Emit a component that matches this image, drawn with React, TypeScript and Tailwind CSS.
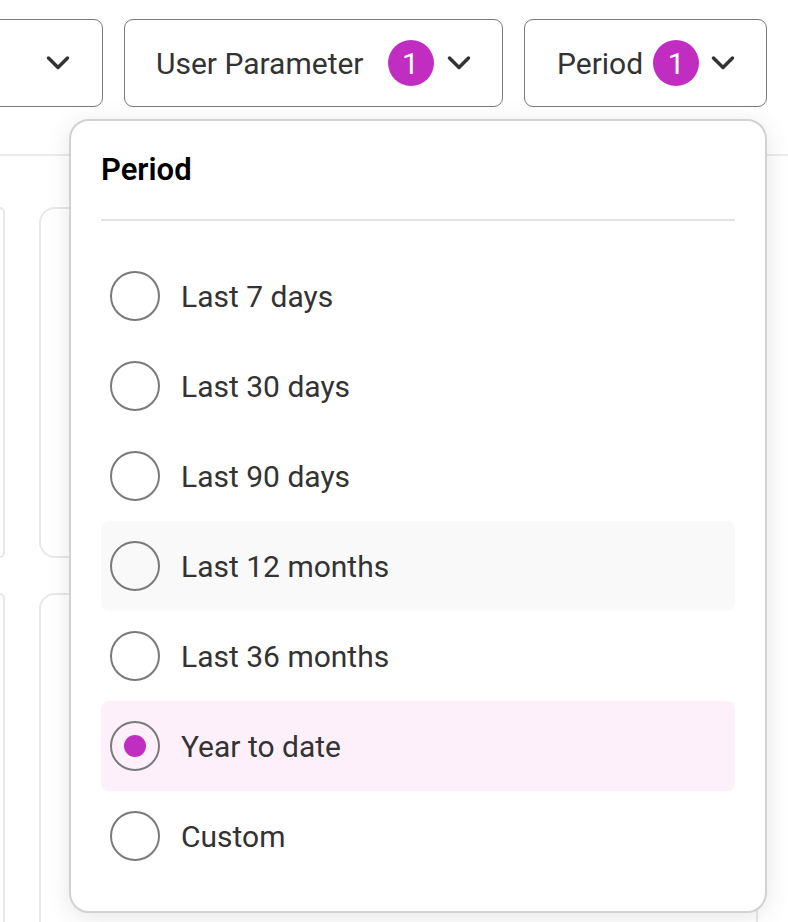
import React from 'react'

const options = [
  'Last 7 days',
  'Last 30 days',
  'Last 90 days',
  'Last 12 months',
  'Last 36 months',
  'Year to date',
  'Custom',
]

function Chevron() {
  return (
    <svg width="26" height="16" viewBox="0 0 26 16" fill="none" className="shrink-0">
      <polyline
        points="3.5,3 13,12.5 22.5,3"
        stroke="#333333"
        strokeWidth="3.5"
        strokeLinecap="round"
        strokeLinejoin="round"
      />
    </svg>
  )
}

function Badge() {
  return (
    <span className="w-[46px] h-[46px] rounded-full bg-[#c22dc1] text-white flex items-center justify-center text-[30px] shrink-0">
      1
    </span>
  )
}

function FilterButton({
  label,
  badge,
  className,
}: {
  label?: string
  badge?: boolean
  className: string
}) {
  return (
    <button
      className={
        'h-[88px] shrink-0 flex items-center rounded-[9px] border-[1.5px] border-[#7a7a7a] bg-white text-[30px] text-[#333333] ' +
        className
      }
    >
      {label && <span>{label}</span>}
      {badge && <Badge />}
      <Chevron />
    </button>
  )
}

export default function App() {
  const selected = 'Year to date'
  const hovered = 'Last 12 months'

  return (
    <div
      className="relative w-[788px] h-[922px] overflow-hidden bg-white"
      style={{ fontFamily: 'Roboto, "Noto Sans", sans-serif' }}
    >
      {/* Filter bar */}
      <div className="h-[156px] border-b-2 border-[#ebebeb] pt-[19px] pr-[21px] flex justify-end gap-[21px]">
        <FilterButton className="w-[220px] justify-end pr-[31px]" />
        <FilterButton label="User Parameter" badge className="w-[379px] pl-[31px] gap-[12px] [&>span:first-child]:mr-[12px]" />
        <FilterButton label="Period" badge className="w-[243px] pl-[32px] gap-[11px] [&>span:first-child]:-mr-px" />
      </div>

      {/* Cards behind the popover */}
      <div className="pt-[51px] grid grid-cols-[5px_719px] gap-x-[34px] gap-y-[35px]">
        <div className="h-[351px] border-2 border-l-0 border-[#e8e8e8] rounded-r-[16px]" />
        <div className="h-[351px] border-2 border-[#e8e8e8] rounded-[16px]" />
        <div className="h-[400px] border-2 border-l-0 border-[#e8e8e8] rounded-r-[16px]" />
        <div className="h-[400px] border-2 border-[#e8e8e8] rounded-[16px]" />
      </div>

      {/* Period popover */}
      <div className="absolute left-[69px] top-[119px] w-[698px] h-[794px] bg-white rounded-[20px] border-2 border-[#d2d2d2] shadow-[0_4px_24px_rgba(0,0,0,0.10)] px-[30px]">
        <div className="h-[100px] flex items-center border-b-2 border-[#e3e3e3]">
          <h3 className="text-[31px] font-semibold text-black">Period</h3>
        </div>
        <div className="pt-[30px] flex flex-col">
          {options.map((opt) => {
            const isSel = opt === selected
            const bg = isSel ? 'bg-[#fdf0fb]' : opt === hovered ? 'bg-[#f9f9f9]' : ''
            return (
              <div
                key={opt}
                className={'h-[90px] flex items-center rounded-[8px] pl-[9px] gap-[21px] ' + bg}
              >
                <span className="w-[50px] h-[50px] rounded-full border-2 border-[#7a7a7a] flex items-center justify-center shrink-0">
                  {isSel && <span className="w-[22px] h-[22px] rounded-full bg-[#c22dc1]" />}
                </span>
                <span className="text-[30px] text-[#333333]">{opt}</span>
              </div>
            )
          })}
        </div>
      </div>
    </div>
  )
}
